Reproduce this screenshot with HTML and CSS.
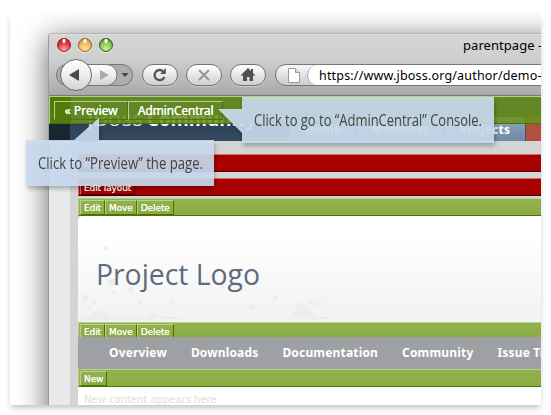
FILE: index.html
```html
<!DOCTYPE html>
<html lang="en">
<head>
<meta charset="utf-8">
<title>parentpage</title>
<link rel="stylesheet" href="styles.css">
</head>
<body>
<div class="shot">
  <div class="window">
    <header class="chrome">
      <div class="titlebar">
        <div class="lights"><i class="light red"></i><i class="light amber"></i><i class="light lime"></i></div>
        <span class="title">parentpage –</span>
      </div>
      <div class="toolbar">
        <svg class="history" width="80" height="34" viewBox="0 0 80 34">
          <defs>
            <linearGradient id="face" x1="0" y1="0" x2="0" y2="1"><stop offset="0" stop-color="#fff"/><stop offset=".5" stop-color="#eee"/><stop offset="1" stop-color="#d2d2d2"/></linearGradient>
          </defs>
          <rect x="1.5" y="6.5" width="76" height="21" rx="10.5" fill="#acacac" stroke="#777"/>
          <path d="M18 6.5H51.500a10.500 10.500 0 0 1 0 21H18z" fill="url(#face)" stroke="#777"/>
          <circle cx="21" cy="17" r="15.500" fill="url(#face)" stroke="#666"/>
          <path d="M14 17l10-6v12z" fill="#4b4b4b"/>
          <path d="M54 17l-9-5v10z" fill="#aaa"/>
          <path d="M66.500 15h7l-3.500 4z" fill="#444"/>
        </svg>
        <span class="pill"><svg width="16" height="16" viewBox="0 0 16 16"><path d="M12.400 10a5.100 5.100 0 1 1-1.300-5.700" fill="none" stroke="#555" stroke-width="2.300"/><path d="M13.800 1v6H8z" fill="#555"/></svg></span>
        <span class="pill"><svg width="16" height="16" viewBox="0 0 16 16"><path d="M3 3l10 10M13 3L3 13" stroke="#999" stroke-width="2.200"/></svg></span>
        <span class="pill"><svg width="16" height="16" viewBox="0 0 16 16"><path d="M8 1L0.500 8.500H3V14h4v-4h2.500v4H13V8.500h2.500L13 6V2h-2v2z" fill="#505050"/></svg></span>
        <div class="address">
          <svg class="doc" width="12" height="15" viewBox="0 0 12 15"><path d="M.5.5h7l4 4v10H.5z" fill="#fff" stroke="#999"/><path d="M7.500.5v4h4" fill="#ddd" stroke="#999"/></svg>
          <span class="url">https://www.jboss.org/author/demo–</span>
        </div>
      </div>
    </header>
    <div class="site-head">
      <div class="brand"><svg width="176" height="30"><text x="0" y="19" textLength="56" lengthAdjust="spacingAndGlyphs" class="brand-a">JBoss</text><text x="60" y="19" textLength="109" lengthAdjust="spacingAndGlyphs" class="brand-b">Community</text></svg></div>
      <nav class="tabs"><span class="t1">Home</span><span class="t2">Members</span><span class="t3">Projects</span><span class="t4"></span></nav>
      <div class="admin"><span class="a1">« Preview</span><span class="a2">AdminCentral</span></div>
    </div>
    <main class="page">
      <div class="bar crimson first"><span class="btn">Edit layout</span></div>
      <div class="bar crimson second"><span class="btn">Edit layout</span></div>
      <div class="bar green"><span class="btn">Edit</span><span class="btn">Move</span><span class="btn">Delete</span></div>
      <section class="hero">
        <svg width="463" height="106" viewBox="0 0 463 106">
          <g fill="#ededed">
            <path d="M5 102q10-2 14-9l3 4 5-5 1 6q5 1 8 5z"/><path d="M65 102q6 0 8-6l4 1 3 3 7 2z"/>
            <path d="M214 101q0-6 5-7l2-6 5 1 6 3q3 6 7 9z"/><path d="M2 101h98v1h126v-1h24v2H95l-93 1z"/>
            <circle cx="28" cy="32" r="2"/><circle cx="34" cy="66" r="4"/><circle cx="53" cy="74" r="3"/><circle cx="36" cy="77" r="2"/><circle cx="77" cy="77" r="1.300"/><circle cx="95" cy="86" r="2"/><circle cx="7" cy="82" r="3"/><circle cx="16" cy="86" r="2"/><circle cx="12" cy="91" r="2"/><circle cx="62" cy="87" r="2"/><path d="M61 84l6 12-4-6z"/>
            <circle cx="144" cy="71" r="1.500"/><circle cx="168" cy="74" r="1.500"/><circle cx="174" cy="91" r="3"/><circle cx="197" cy="82" r="2.200"/><circle cx="232" cy="86" r="2.200"/><circle cx="237" cy="88" r="3"/><circle cx="248" cy="84" r="1.500"/><circle cx="222" cy="91" r="4"/>
          </g>
          <text x="18" y="69" textLength="164" lengthAdjust="spacingAndGlyphs" class="logo">Project Logo</text>
        </svg>
      </section>
      <div class="bar green cut"><span class="btn">Edit</span><span class="btn">Move</span><span class="btn">Delete</span></div>
      <nav class="subnav"><span>Overview</span><span>Downloads</span><span>Documentation</span><span>Community</span><span>Issue Tracker</span></nav>
      <div class="bar green"><span class="btn">New</span></div>
      <p class="empty">New content appears here</p>
    </main>
  </div>
</div>
<svg class="callout preview" width="200" height="80" viewBox="0 0 200 80">
  <path d="M0 23H48L73 1V23H188V69H0z" class="note"/>
  <text x="12" y="52" textLength="165" lengthAdjust="spacingAndGlyphs" class="note-text">Click to “Preview” the page.</text>
</svg>
<svg class="callout central" width="290" height="56" viewBox="0 0 290 56">
  <path d="M0 12H24V0H276V46H24V36z" class="note"/>
  <text x="36" y="29" textLength="228" lengthAdjust="spacingAndGlyphs" class="note-text">Click to go to “AdminCentral” Console.</text>
</svg>
</body>
</html>
```
FILE: styles.css
```css
* { box-sizing: border-box; }
body { margin: 0; width: 551px; height: 415px; overflow: hidden; background: #fff; position: relative; display: flex; font-family: "Open Sans", sans-serif; }
.shot { margin: 13px 0 0 10px; width: 531px; height: 392px; padding: 20px 0 0 38px; overflow: hidden; box-shadow: 0 4px 6px -1px rgba(0,0,0,.24); background: #fff; }
.window { width: 600px; height: 410px; border: 1px solid #999b9d; border-top-color: #b4b4b4; border-radius: 4px 0 0 0; background: #d3d3d3; box-shadow: 0 6px 30px rgba(0,0,0,.62); overflow: hidden; }
.chrome { height: 62px; background: linear-gradient(#d5d5d5 0, #cfcfcf 40%, #a9a9a9); border-top: 1px solid #e0e0e0; border-bottom: 1px solid #777; }
.titlebar { height: 23px; display: flex; align-items: flex-start; }
.lights { display: flex; gap: 7px; padding: 3px 0 0 8px; width: 414px; }
.light { width: 14px; height: 14px; border-radius: 50%; border: 1px solid #8b2020; box-shadow: 0 1px 0 #eee; }
.red { background: radial-gradient(ellipse at 50% 12%, #fff 0 10%, transparent 25%), radial-gradient(circle at 50% 88%, #f5b0aa, #e53038 55%, #9e2020); }
.amber { border-color: #9a5c20; background: radial-gradient(ellipse at 50% 12%, #fff 0 10%, transparent 25%), radial-gradient(circle at 50% 80%, #f9e19a, #eab35b 60%, #a96322); }
.lime { border-color: #315b16; background: radial-gradient(ellipse at 50% 12%, #fff 0 10%, transparent 25%), radial-gradient(circle at 50% 80%, #c9ec9a, #83bd4d 60%, #356313); }
.title { font: 13px/21px "Noto Sans", sans-serif; letter-spacing: .05px; white-space: nowrap; color: #000; }
.toolbar { height: 34px; display: flex; align-items: center; padding-left: 6px; }
.history { flex: none; margin-right: 7px; }
.pill { flex: none; width: 36px; height: 22px; margin-right: 8px; border: 1px solid #747474; border-radius: 11px; background: linear-gradient(#fff, #e8e8e8 50%, #cecece); box-shadow: 0 1px 0 #ccc; display: flex; align-items: center; justify-content: center; }
.address { flex: none; margin-left: 1px; width: 360px; height: 22px; border: 1px solid #777; border-radius: 11px; background: linear-gradient(#f8f8f8, #ccc); display: flex; align-items: center; padding-left: 12px; }
.doc { flex: none; }
.url { margin-left: 7px; padding-left: 11px; width: 340px; height: 20px; border-left: 1px solid #aaa; border-radius: 10px 0 0 10px; background: #fff; font: 12.5px/21px "Noto Sans", sans-serif; letter-spacing: .18px; color: #000; white-space: nowrap; }
.site-head { height: 45px; position: relative; display: flex; background: linear-gradient(90deg, #192632 21px, transparent 21px), linear-gradient(#2b4056 50%, #354a60); }
.brand { width: 241px; padding: 11px 0 0 38px; }
.brand-a { font: 20px "Open Sans"; fill: #dce3ea; }
.brand-b { font: bold 20px "Open Sans"; fill: #fff; }
.tabs { display: flex; margin-top: 21px; height: 24px; }
.tabs span { padding-top: 5px; text-align: center; font: bold 12px/15px "Noto Sans", sans-serif; letter-spacing: .3px; color: #fff; background: linear-gradient(#92a7bb, #6e8aa5); border-right: 1px solid #3c536b; }
.tabs .t1 { width: 67px; }
.tabs .t2 { width: 88px; }
.tabs .t3 { width: 81px; }
.tabs .t4 { width: 40px; background: #b2503f; }
.admin { position: absolute; inset: 0 0 auto 0; height: 28px; padding: 4px; display: flex; background: linear-gradient(90deg, rgba(88,132,4,.9) 21px, rgba(106,146,29,.87) 21px); border-top: 1px solid #b4d47c; border-left: 1px solid #b4d47c; border-bottom: 1px solid #477500; }
.admin span { height: 19px; border: 1px solid; border-color: #b8d28d #4d7411 #4d7411 #b8d28d; font: 12px/18px "Noto Sans", sans-serif; color: #fff; text-align: center; text-shadow: .3px 0 #fff; }
.admin .a1 { width: 74px; }
.admin .a2 { width: 95px; letter-spacing: -.15px; }
.page { width: 600px; padding-left: 29px; background: linear-gradient(90deg, #e9eaec 21px, #d4d4d4 21px); padding-top: 13px; }
.bar { height: 18px; border-top: 1px solid; border-left: 1px solid; border-bottom: 1px solid; padding: 1px; display: flex; gap: 0; }
.crimson { background: #a90000; border-color: #d26b6b #500 #3c0000 #d26b6b; }
.first { margin-bottom: 6px; }
.second { margin-bottom: 2px; }
.green { background: linear-gradient(#92b150, #8aac42); border-color: #b9d287 #3d6b00 #4a7700 #b9d287; }
.btn { height: 15px; padding: 0 3px; border: 1px solid; border-color: #b9d287 #477400 #477400 #b9d287; font: 9px/14px "DejaVu Sans", sans-serif; color: #fff; letter-spacing: -.1px; white-space: nowrap; text-shadow: 0 0 .5px #fff; }
.crimson .btn { border-color: #d26b6b #400 #400 #d26b6b; }
.hero { height: 106px; background: linear-gradient(#fff 20%, #f3f3f3 90%); border-radius: 5px 0 0 0; }
.hero svg { display: block; }
.logo { font: 30px "Open Sans"; fill: #5d6c7c; }
.cut { height: 15px; border-bottom: 0; overflow: hidden; }
.subnav { height: 32px; background: #9fa0a4; padding-left: 31px; display: flex; gap: 24px; font: bold 12px/31px "Noto Sans", sans-serif; letter-spacing: .17px; color: #fff; white-space: nowrap; }
.empty { margin: 0; height: 30px; padding: 5px 0 0 6px; background: #fff; font: 10px/15px "DejaVu Sans", sans-serif; color: #e0e0e0; }
.callout { position: absolute; overflow: visible; filter: drop-shadow(1px 3px 2px rgba(0,0,0,.28)); }
.preview { left: 26px; top: 117px; }
.central { left: 218px; top: 97px; }
.note { fill: #c9ddf0; fill-opacity: .91; }
.note-text { font: 16px "Open Sans"; fill: #444; }
```
